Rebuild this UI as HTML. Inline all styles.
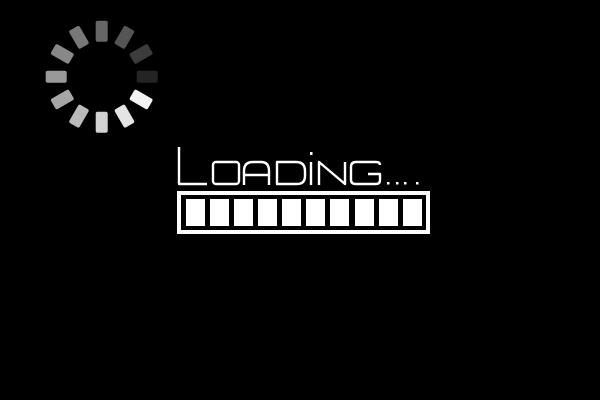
<!DOCTYPE html>
<html><head><style>html,body{margin:0;padding:0;background:#000;width:600px;height:400px;overflow:hidden}</style></head>
<body>
<svg width="600" height="400" viewBox="0 0 600 400" xmlns="http://www.w3.org/2000/svg">
<rect width="600" height="400" fill="#000"/>
<g transform="translate(101.7,76.7)">
<rect x="-6" y="-56" width="12" height="21" rx="2" fill="#666"/>
<rect x="-6" y="-56" width="12" height="21" rx="2" fill="#555" transform="rotate(30)"/>
<rect x="-6" y="-56" width="12" height="21" rx="2" fill="#3c3c3c" transform="rotate(60)"/>
<rect x="-6" y="-56" width="12" height="21" rx="2" fill="#242424" transform="rotate(90)"/>
<rect x="-6" y="-56" width="12" height="21" rx="2" fill="#f2f2f2" transform="rotate(120)"/>
<rect x="-6" y="-56" width="12" height="21" rx="2" fill="#e4e4e4" transform="rotate(150)"/>
<rect x="-6" y="-56" width="12" height="21" rx="2" fill="#d2d2d2" transform="rotate(180)"/>
<rect x="-6" y="-56" width="12" height="21" rx="2" fill="#bababa" transform="rotate(210)"/>
<rect x="-6" y="-56" width="12" height="21" rx="2" fill="#a6a6a6" transform="rotate(240)"/>
<rect x="-6" y="-56" width="12" height="21" rx="2" fill="#999" transform="rotate(270)"/>
<rect x="-6" y="-56" width="12" height="21" rx="2" fill="#888" transform="rotate(300)"/>
<rect x="-6" y="-56" width="12" height="21" rx="2" fill="#777" transform="rotate(330)"/>
</g>
<g fill="none" stroke="#fff" stroke-width="2.4" stroke-linejoin="round">
<path d="M179 147 V184 H207"/>
<rect x="213" y="162" width="26" height="22" rx="3"/>
<path d="M244 185 V171 Q244 162 253 162 H261 Q269 162 269 171 V185 M244 175 H269"/>
<path d="M277 162 H296 Q305 162 305 171 V176 Q305 184 297 184 H277 Z"/>
<path d="M311 162 V185"/>
<path d="M319 185 V162 L345 184 V162"/>
<path d="M380 165 Q380 162 376 162 H356 Q351 162 351 167 V180 Q351 184 356 184 H376 Q380 184 380 180 V174 H368"/>
</g>
<g fill="#fff">
<rect x="310" y="152" width="2.5" height="3"/>
<rect x="387" y="182" width="2.5" height="2.5"/>
<rect x="396" y="182" width="2.5" height="2.5"/>
<rect x="404" y="182" width="2.5" height="2.5"/>
<rect x="416" y="182" width="2.5" height="2.5"/>
</g>
<rect x="179" y="193" width="249" height="39" fill="none" stroke="#fff" stroke-width="4"/>
<g fill="#fff">
<rect x="186" y="199" width="19" height="27"/>
<rect x="210" y="199" width="19" height="27"/>
<rect x="234" y="199" width="19" height="27"/>
<rect x="258" y="199" width="19" height="27"/>
<rect x="282" y="199" width="19" height="27"/>
<rect x="306" y="199" width="19" height="27"/>
<rect x="330" y="199" width="19" height="27"/>
<rect x="355" y="199" width="19" height="27"/>
<rect x="379" y="199" width="19" height="27"/>
<rect x="403" y="199" width="19" height="27"/>
</g>
</svg>
</body></html>
